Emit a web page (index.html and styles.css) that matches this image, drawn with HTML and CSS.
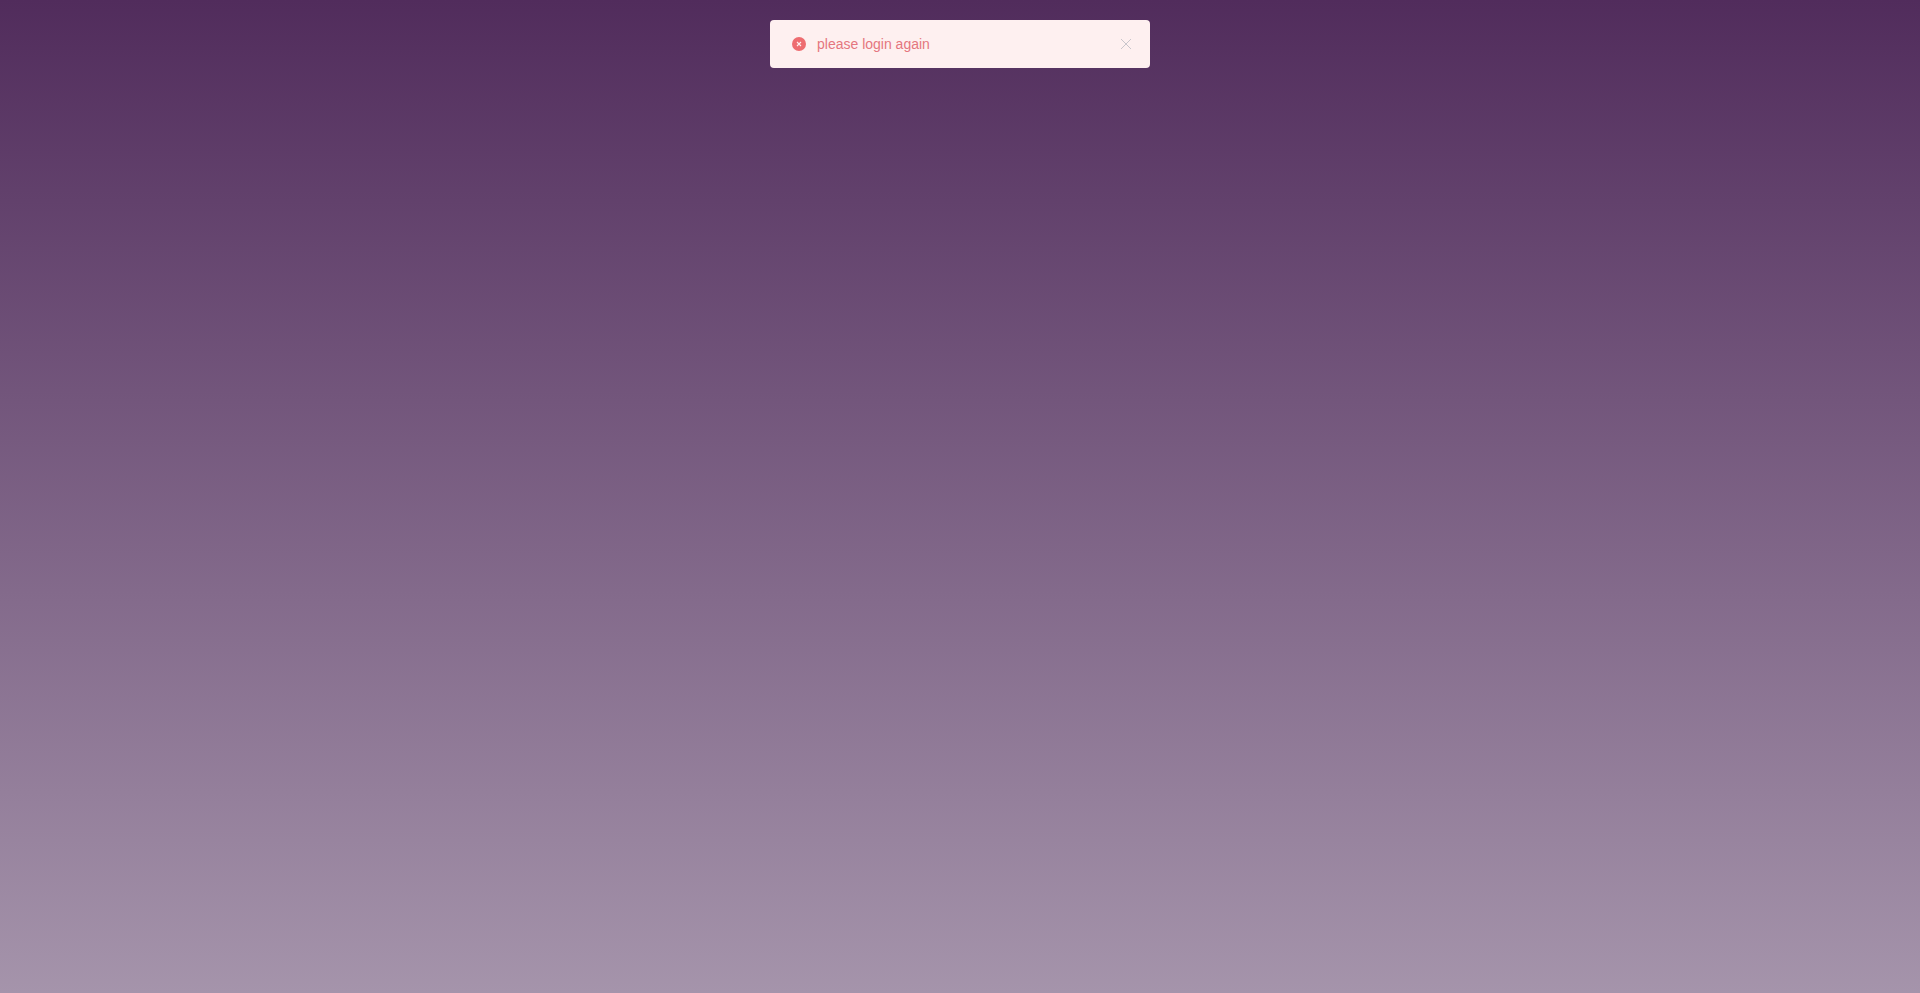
FILE: index.html
```html
<!DOCTYPE html>
<html lang="en">
<head>
<meta charset="utf-8">
<title>Login</title>
<link rel="stylesheet" href="styles.css">
</head>
<body>
<div class="toast" role="alert">
  <svg class="toast-icon" viewBox="0 0 14 14" aria-hidden="true">
    <circle cx="7" cy="7" r="7" fill="#ee6c70"/>
    <path d="M5 5l4 4M9 5L5 9" stroke="#fef0f0" stroke-width="1.100" fill="none"/>
  </svg>
  <p class="toast-text">please login again</p>
  <svg class="toast-close" viewBox="0 0 16 16" aria-hidden="true">
    <path d="M3 3l10 10M13 3L3 13" stroke="#c9c6cc" stroke-width="1" fill="none"/>
  </svg>
</div>
</body>
</html>
```
FILE: styles.css
```css
html, body {
  margin: 0;
  height: 100%;
}
body {
  background: linear-gradient(180deg, #512c5c 0%, #a594ab 100%);
  font-family: "Liberation Sans", Arial, sans-serif;
  overflow: hidden;
}
.toast {
  position: absolute;
  top: 20px;
  left: 770px;
  width: 380px;
  height: 48px;
  box-sizing: border-box;
  display: flex;
  align-items: center;
  padding: 0 16px 0 22px;
  background: #fef0f0;
  border-radius: 4px;
}
.toast-icon {
  width: 14px;
  height: 14px;
  flex: none;
  margin-right: 11px;
}
.toast-text {
  margin: 0;
  flex: 1;
  font-size: 14px;
  line-height: 1;
  color: #e5767e;
}
.toast-close {
  width: 16px;
  height: 16px;
  flex: none;
}
```
